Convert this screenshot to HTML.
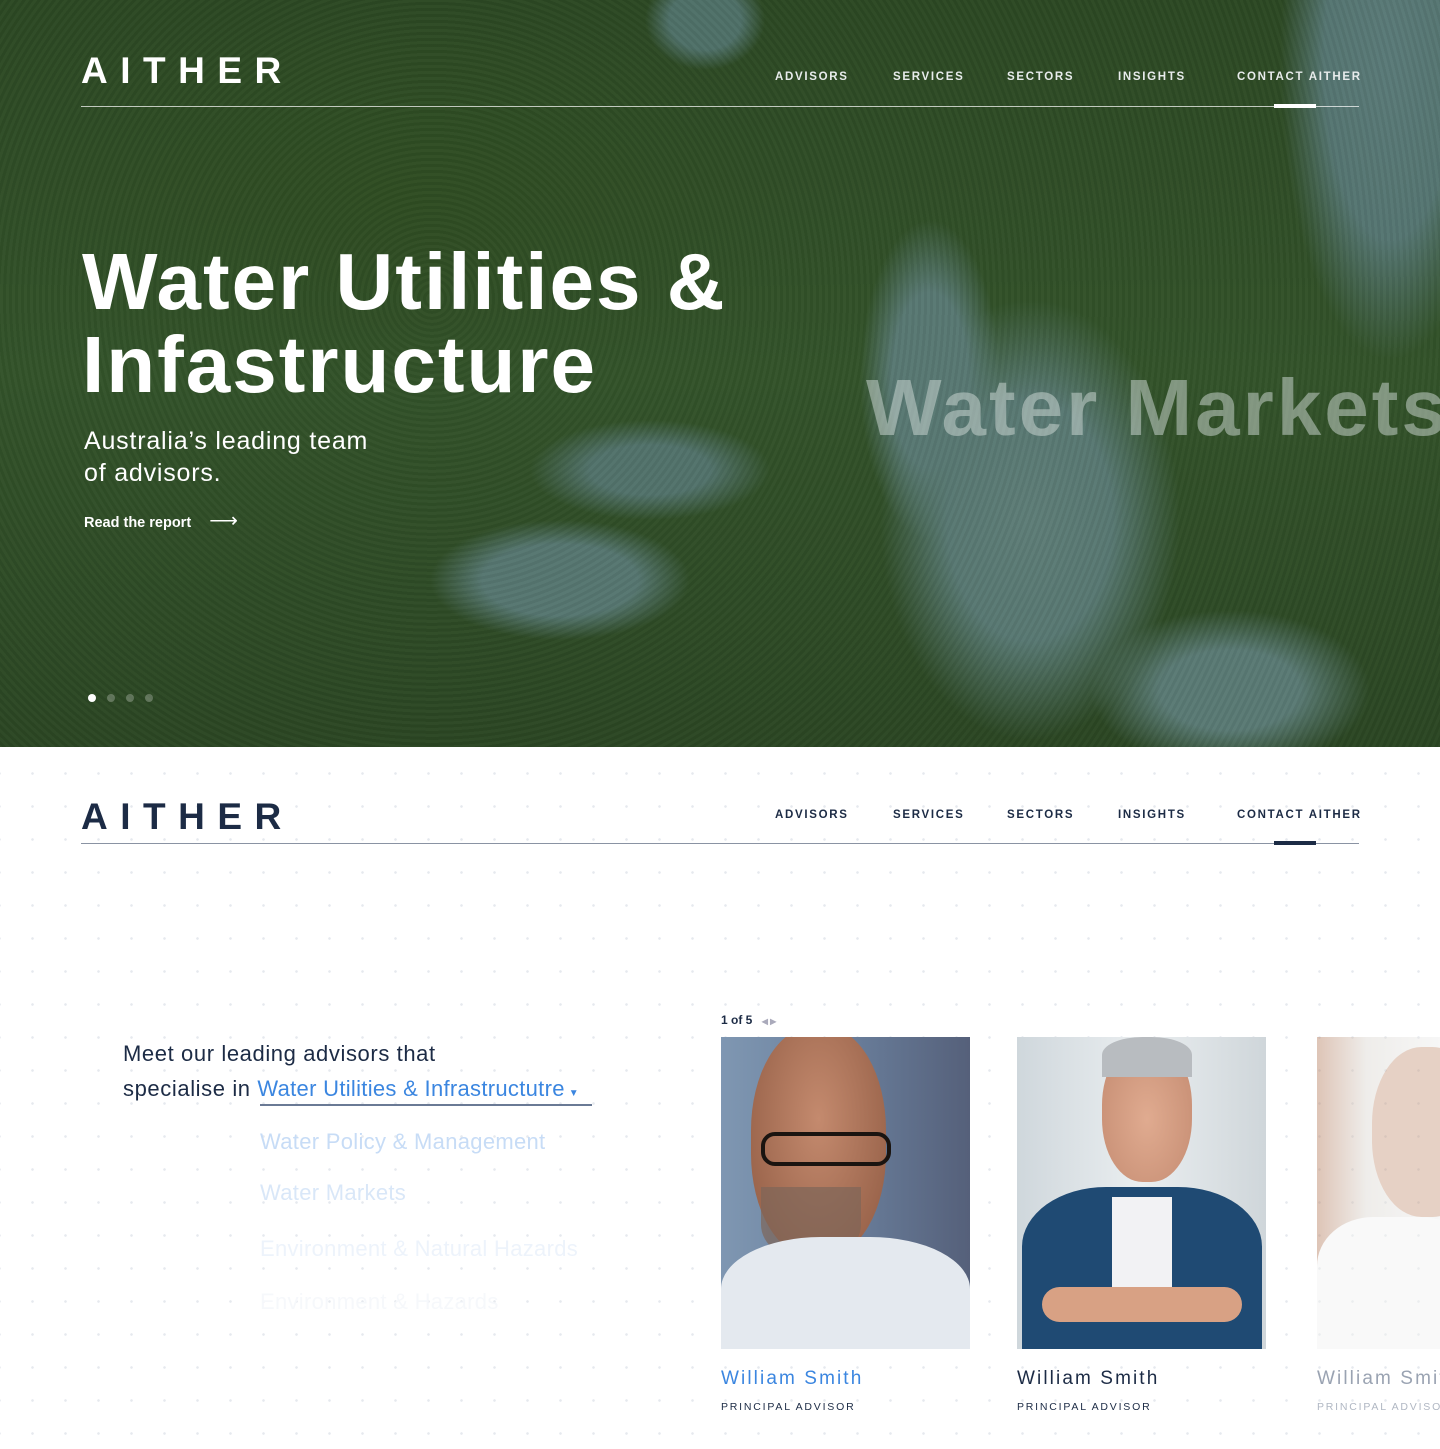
<!DOCTYPE html>
<html><head><meta charset="utf-8">
<style>
*{margin:0;padding:0;box-sizing:border-box}
body{width:1440px;height:1449px;overflow:hidden;background:#fff;font-family:"Liberation Sans",sans-serif;position:relative}
.hero{position:absolute;left:0;top:0;width:1440px;height:747px;overflow:hidden;
background:
radial-gradient(ellipse 60px 50px at 705px 20px,#4f7068 0,#4f7068 60%,transparent 100%),
radial-gradient(ellipse 110px 300px at 1390px 60px,#5a7a78 0,#557571 60%,transparent 100%),
radial-gradient(ellipse 130px 60px at 560px 580px,#567670 0,#567670 60%,transparent 100%),
radial-gradient(ellipse 150px 220px at 1030px 520px,#5e7d77 0,#587872 55%,transparent 100%),
radial-gradient(ellipse 70px 160px at 930px 380px,#587872 0,#587872 55%,transparent 100%),
radial-gradient(ellipse 120px 50px at 650px 470px,#52726b 0,#52726b 50%,transparent 100%),
radial-gradient(ellipse 140px 80px at 1230px 690px,#5a7a74 0,#5a7a74 50%,transparent 100%),
radial-gradient(ellipse 400px 200px at 400px 200px,#2f4d22 0,transparent 100%),
linear-gradient(180deg,#2c4823 0%,#33532a 50%,#2b4623 100%);}
.hero:after{content:"";position:absolute;inset:0;background:repeating-radial-gradient(circle at 30% 40%,rgba(0,0,0,.04) 0 3px,rgba(255,255,255,.02) 3px 6px);}
.nav{position:absolute;left:81px;width:1278px;height:1px}
.logo{position:absolute;left:81px;font-size:37px;font-weight:700;letter-spacing:12.5px;}
.links{position:absolute;font-size:11.5px;letter-spacing:1.7px;font-weight:700}
.links span{position:absolute;white-space:nowrap}
.h1{position:absolute;left:82px;top:240px;color:#fff;font-weight:700;font-size:80px;line-height:83px;letter-spacing:2px;z-index:2}
.sub{position:absolute;left:84px;top:425px;color:#fff;font-size:25px;line-height:32px;letter-spacing:.8px;z-index:2}
.read{position:absolute;left:84px;top:508px;color:#fff;font-size:14.5px;font-weight:700;z-index:2}
.ghost{position:absolute;left:866px;top:362px;color:rgba(210,220,215,.5);font-size:80px;font-weight:700;letter-spacing:3px;white-space:nowrap;z-index:2}
.dots{position:absolute;top:689px;left:88px;z-index:2}
.dots i{display:inline-block;width:8px;height:8px;border-radius:50%;background:rgba(255,255,255,.25);margin-right:11px}
.bg2{position:absolute;top:747px;left:0;width:1440px;height:702px;background-image:radial-gradient(circle,#e6e9ee 1.1px,transparent 1.5px);background-size:33px 33px;background-position:16px 10px}
.card{position:absolute;top:1037px;width:249px;height:312px;overflow:hidden}
.name{position:absolute;top:1368px;font-size:19px;letter-spacing:2.1px}
.role{position:absolute;top:1401px;font-size:10.5px;letter-spacing:1.8px;color:#1c2b45}
.opt{position:absolute;left:260px;font-size:22px;white-space:nowrap;letter-spacing:.3px}
</style></head><body>
<div class="hero">
<div class="logo" style="top:50px;color:#fff;z-index:2">AITHER</div>
<div class="links" style="top:71px;left:0;color:#e8ecec;z-index:2">
<span style="left:775px">ADVISORS</span><span style="left:893px">SERVICES</span><span style="left:1007px">SECTORS</span><span style="left:1118px">INSIGHTS</span><span style="left:1237px">CONTACT AITHER</span></div>
<div class="nav" style="top:106px;background:rgba(255,255,255,.7);z-index:2"></div>
<div style="position:absolute;left:1274px;top:104px;width:42px;height:4px;background:#fff;z-index:2"></div>
<div class="h1">Water Utilities &amp;<br>Infastructure</div>
<div class="sub">Australia’s leading team<br>of advisors.</div>
<div class="read">Read the report <span style="font-weight:400;margin-left:14px;font-size:20px">⟶</span></div>
<div class="ghost">Water Markets</div>
<div class="dots"><i style="background:#fff"></i><i></i><i></i><i></i></div>
</div>
<div class="bg2"></div>
<div class="logo" style="top:796px;color:#1c2b45">AITHER</div>
<div class="links" style="top:809px;left:0;color:#1c2b45">
<span style="left:775px">ADVISORS</span><span style="left:893px">SERVICES</span><span style="left:1007px">SECTORS</span><span style="left:1118px">INSIGHTS</span><span style="left:1237px">CONTACT AITHER</span></div>
<div class="nav" style="top:843px;background:#8a93a3"></div>
<div style="position:absolute;left:1274px;top:841px;width:42px;height:4px;background:#1c2b45"></div>

<div style="position:absolute;left:123px;top:1036px;font-size:22px;line-height:35px;color:#1c2b45;letter-spacing:.6px">Meet our leading advisors that<br>specialise in <span style="color:#3b86e0;letter-spacing:.3px">Water Utilities &amp; Infrastructutre</span><span style="color:#3b86e0;font-size:10px;margin-left:4px">▼</span></div>
<div style="position:absolute;left:260px;top:1104px;width:332px;height:2px;background:#6a7a95"></div>
<div class="opt" style="top:1129px;color:#c7dcf6">Water Policy &amp; Management</div>
<div class="opt" style="top:1180px;color:#d9e7f8">Water Markets</div>
<div class="opt" style="top:1236px;color:#edf3fb">Environment &amp; Natural Hazards</div>
<div class="opt" style="top:1289px;color:#f6f8fb">Environment &amp; Hazards</div>

<div style="position:absolute;left:721px;top:1013px;font-size:12px;font-weight:700;color:#1c2b45">1 of 5 <span style="color:#aab;font-size:8px;margin-left:6px">◀ ▶</span></div>

<div class="card" style="left:721px;background:linear-gradient(90deg,#7f97b2 0%,#6a7f9c 50%,#55607a 100%)">
<div style="position:absolute;left:30px;top:-10px;width:135px;height:230px;border-radius:45%;background:radial-gradient(ellipse at 50% 40%,#c48a6e,#8f5a42)"></div>
<div style="position:absolute;left:40px;top:95px;width:130px;height:34px;border:4px solid #1a1410;border-radius:14px"></div>
<div style="position:absolute;left:40px;top:150px;width:100px;height:75px;border-radius:0 0 50% 50%;background:#7d6558;opacity:.7"></div>
<div style="position:absolute;left:0;top:200px;width:249px;height:130px;background:#e4e9ef;border-radius:40% 40% 0 0"></div>
</div>
<div class="card" style="left:1017px;background:linear-gradient(90deg,#cfd7dc,#eaeef0 50%,#cfd6da)">
<div style="position:absolute;left:85px;top:5px;width:90px;height:140px;border-radius:45%;background:radial-gradient(ellipse at 50% 55%,#e0ab90,#c38a70)"></div>
<div style="position:absolute;left:85px;top:0;width:90px;height:40px;border-radius:45% 45% 0 0;background:#b8bcc0"></div>
<div style="position:absolute;left:5px;top:150px;width:240px;height:170px;border-radius:35% 35% 0 0;background:#1f4a73"></div>
<div style="position:absolute;left:95px;top:160px;width:60px;height:110px;background:#f2f2f4"></div>
<div style="position:absolute;left:25px;top:250px;width:200px;height:35px;border-radius:20px;background:#d8a184"></div>
</div>
<div class="card" style="left:1317px;width:123px;opacity:.45;background:linear-gradient(90deg,#b77f60,#dcd8d2 40%,#eeeeee)">
<div style="position:absolute;left:55px;top:10px;width:110px;height:170px;border-radius:45%;background:#c89a80"></div>
<div style="position:absolute;left:0;top:180px;width:160px;height:140px;border-radius:35% 35% 0 0;background:#f2f2f2"></div>
</div>

<div class="name" style="left:721px;color:#3b86e0">William Smith</div>
<div class="role" style="left:721px">PRINCIPAL ADVISOR</div>
<div class="name" style="left:1017px;color:#1c2b45">William Smith</div>
<div class="role" style="left:1017px">PRINCIPAL ADVISOR</div>
<div class="name" style="left:1317px;color:#9aa3b2;white-space:nowrap">William Smith</div>
<div class="role" style="left:1317px;color:#b0b7c3;white-space:nowrap">PRINCIPAL ADVISOR</div>
</body></html>
